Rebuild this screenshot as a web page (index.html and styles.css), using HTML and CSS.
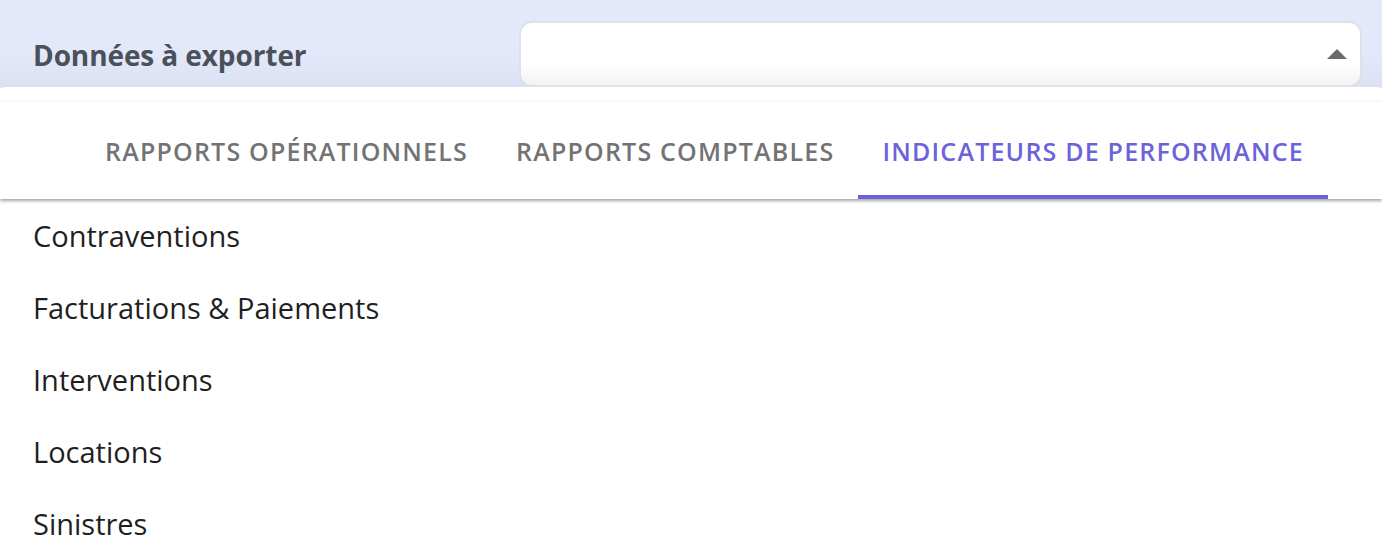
FILE: index.html
```html
<!DOCTYPE html>
<html lang="fr">
<head>
<meta charset="utf-8">
<link rel="stylesheet" href="styles.css">
</head>
<body>
<header class="header">
  <div class="label">Données à exporter</div>
  <div class="select">
    <svg class="arrow" width="20" height="10" viewBox="0 0 20 10"><path d="M0 10 L10 0 L20 10 Z" fill="#6b6b6b"/></svg>
  </div>
</header>
<div class="panel">
  <nav class="tabs">
    <div class="tab">RAPPORTS OPÉRATIONNELS</div>
    <div class="tab">RAPPORTS COMPTABLES</div>
    <div class="tab active">INDICATEURS DE PERFORMANCE</div>
  </nav>
  <ul class="list">
    <li>Contraventions</li>
    <li>Facturations &amp; Paiements</li>
    <li>Interventions</li>
    <li>Locations</li>
    <li>Sinistres</li>
  </ul>
</div>
</body>
</html>
```
FILE: styles.css
```css
html, body {
  margin: 0;
  padding: 0;
  background: #ffffff;
  font-family: "Open Sans", "Noto Sans", sans-serif;
  overflow: hidden;
}
.header {
  height: 88px;
  box-sizing: border-box;
  display: grid;
  grid-template-columns: 486px 1fr;
  padding: 21px 20px 0 33px;
  background: linear-gradient(#e3e8fb 0%, #e3e8fb 60%, #dbe0f2 100%);
}
.label {
  font-size: 28px;
  font-weight: 700;
  color: #4a5158;
  padding-top: 15px;
  letter-spacing: -0.1px;
}
.select {
  height: 66px;
  box-sizing: border-box;
  border: 2px solid #dfe1e7;
  border-radius: 13px;
  background: linear-gradient(#ffffff 0%, #ffffff 65%, #f3f3f3 100%);
  display: flex;
  align-items: center;
  justify-content: flex-end;
  padding-right: 13px;
}
.arrow {
  display: block;
  margin-top: -1px;
}
.panel {
  background: #ffffff;
  border-radius: 5px 5px 0 0;
  padding-top: 15px;
  margin-top: -1px;
}
.tabs {
  display: flex;
  height: 97px;
  padding-left: 81px;
  box-shadow: 0 2px 3px rgba(0,0,0,0.35), 0 -1px 2px rgba(0,0,0,0.04);
  position: relative;
}
.tab {
  padding: 5px 24px 0 24px;
  display: flex;
  align-items: center;
  font-size: 25px;
  font-weight: 600;
  color: #737373;
  letter-spacing: 1.2px;
  box-sizing: border-box;
  border-bottom: 4px solid transparent;
}
.tab.active {
  color: #6c63d9;
  border-bottom-color: #6c63d9;
}
.list {
  list-style: none;
  margin: 0;
  padding: 0;
}
.list li {
  height: 72px;
  display: flex;
  align-items: center;
  padding-left: 33px;
  font-size: 29px;
  color: #1f1f1f;
}
```
